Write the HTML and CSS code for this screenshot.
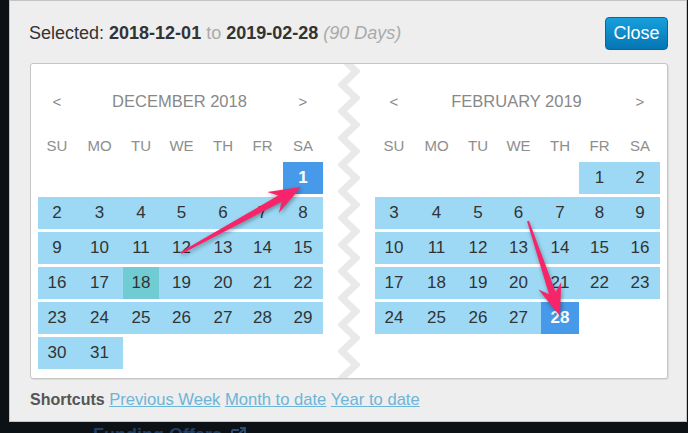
FILE: index.html
```html
<!DOCTYPE html>
<html lang="en">
<head>
    <meta charset="UTF-8">
    <title>Date Range</title>
    <link rel="stylesheet" href="styles.css">
</head>
<body>
    <div class="dialog">
        <div class="dialog-head">
            <div class="summary">Selected: <b>2018-12-01</b> <span class="muted">to</span> <b>2019-02-28</b> <i class="muted">(90 Days)</i></div>
            <button type="button" class="btn-close">Close</button>
        </div>

        <div class="calendars">
            <div class="month">
                <div class="month-head">
                    <span class="nav">&lt;</span>
                    <span class="title">DECEMBER 2018</span>
                    <span class="nav nav-next">&gt;</span>
                </div>
                <div class="weekdays">
                    <span>SU</span><span>MO</span><span>TU</span><span>WE</span><span>TH</span><span>FR</span><span>SA</span>
                </div>
                <div class="days">
                    <span class="empty"></span><span class="empty"></span><span class="empty"></span><span class="empty"></span><span class="empty"></span><span class="empty"></span><span class="sel">1</span>
                    <span>2</span><span>3</span><span>4</span><span>5</span><span>6</span><span>7</span><span>8</span>
                    <span>9</span><span>10</span><span>11</span><span>12</span><span>13</span><span>14</span><span>15</span>
                    <span>16</span><span>17</span><span class="today">18</span><span>19</span><span>20</span><span>21</span><span>22</span>
                    <span>23</span><span>24</span><span>25</span><span>26</span><span>27</span><span>28</span><span>29</span>
                    <span>30</span><span>31</span>
                </div>
            </div>

            <div class="tear">
                <svg width="22" height="314" viewBox="0 0 22 314">
                    <polyline points="4,-6 18,7.3 4,20.7 18,34 4,47.3 18,60.7 4,74 18,87.3 4,100.7 18,114 4,127.3 18,140.7 4,154 18,167.3 4,180.7 18,194 4,207.3 18,220.7 4,234 18,247.3 4,260.7 18,274 4,287.3 18,300.7 4,314 18,327"
                        fill="none" stroke="#e9e9e9" stroke-width="7" />
                </svg>
            </div>

            <div class="month">
                <div class="month-head">
                    <span class="nav">&lt;</span>
                    <span class="title">FEBRUARY 2019</span>
                    <span class="nav nav-next">&gt;</span>
                </div>
                <div class="weekdays">
                    <span>SU</span><span>MO</span><span>TU</span><span>WE</span><span>TH</span><span>FR</span><span>SA</span>
                </div>
                <div class="days">
                    <span class="empty"></span><span class="empty"></span><span class="empty"></span><span class="empty"></span><span class="empty"></span><span>1</span><span>2</span>
                    <span>3</span><span>4</span><span>5</span><span>6</span><span>7</span><span>8</span><span>9</span>
                    <span>10</span><span>11</span><span>12</span><span>13</span><span>14</span><span>15</span><span>16</span>
                    <span>17</span><span>18</span><span>19</span><span>20</span><span>21</span><span>22</span><span>23</span>
                    <span>24</span><span>25</span><span>26</span><span>27</span><span class="sel">28</span>
                </div>
            </div>
        </div>

        <div class="shortcuts">
            <b>Shortcuts</b>
            <a href="#">Previous Week</a>
            <a href="#">Month to date</a>
            <a href="#">Year to date</a>
        </div>
    </div>

    <div class="below">Funding Offers
        <svg width="16" height="16" viewBox="0 0 16 16"><path d="M2 3h7M2 3v12h12V8M10 1h5v5M15 1L8 8" fill="none" stroke="#2a4b73" stroke-width="2"/></svg>
    </div>

    <!-- annotation arrows drawn over the screenshot -->
    <svg class="arrows" width="688" height="433" viewBox="0 0 688 433">
        <polygon points="180.5,252.1 278.3,195.5 267.2,191.9 301,187 278.8,212.9 281.7,201.7 181.5,253.9" />
        <polygon points="528.95,220.7 555.6,292.1 561.2,281.9 560,316 538.4,289.5 549,294.3 527.05,221.3" />
    </svg>
</body>
</html>
```

FILE: styles.css
```css
* {
    margin: 0;
    padding: 0;
    box-sizing: border-box;
}

html, body {
    height: 100%;
    overflow: hidden;
}

body {
    font-family: "Liberation Sans", Arial, sans-serif;
    background: #0c1115;
    color: #333;
    position: relative;
}

.dialog {
    margin-left: 9px;
    width: 678px;
    background: #eeeeee;
    border: 1px solid #c4c4c4;
    padding: 16px 18px 11px 20px;
}

.dialog-head {
    display: flex;
    align-items: center;
    justify-content: space-between;
    height: 33px;
}

.summary {
    font-size: 18px;
    color: #333;
    margin-left: -1px;
}

.summary b {
    font-weight: bold;
}

.muted {
    color: #aaa;
}

.btn-close {
    width: 63px;
    height: 33px;
    font-family: inherit;
    font-size: 18px;
    color: #fff;
    background: linear-gradient(to bottom, #17a0dd 0%, #0575b3 100%);
    border: 1px solid #06679e;
    border-radius: 4px;
    cursor: pointer;
}

.calendars {
    display: flex;
    margin-top: 13px;
    padding: 0 7px;
    background: #fff;
    border: 1px solid #c6c6c6;
    border-radius: 3px;
    box-shadow: 1px 1px 1px rgba(0,0,0,0.08);
}

.month {
    width: 285px;
    padding: 21px 0 9px;
}

.month-head,
.weekdays,
.days {
    display: grid;
    grid-template-columns: 38px 47px 36px 45px 38px 41px 40px;
}

.month-head {
    height: 32px;
    align-items: center;
    color: #888;
    font-size: 16.5px;
    text-align: center;
}

.month-head .title {
    grid-column: 2 / 7;
}

.nav {
    font-size: 15px;
}

.weekdays {
    margin-top: 13px;
    height: 30px;
    align-items: center;
    color: #8e8e8e;
    font-size: 15px;
    text-align: center;
}

.days {
    margin-top: 2px;
    row-gap: 3px;
    grid-auto-rows: 32px;
}

.days span {
    display: flex;
    align-items: center;
    justify-content: center;
    background: #9dd9f5;
    color: #333;
    font-size: 17px;
}

.days .empty {
    background: transparent;
}

.days .today {
    background: #70cbd3;
}

.days .sel {
    background: #4799e9;
    color: #fff;
    font-weight: bold;
}

.tear {
    width: 52px;
    display: flex;
    justify-content: center;
}

.tear svg {
    display: block;
}

.shortcuts {
    margin-top: 11px;
    line-height: 20px;
    font-size: 16px;
}

.shortcuts b {
    color: #555;
}

.shortcuts a {
    color: #6cb5d9;
    font-size: 16.6px;
    text-decoration: underline;
}

.below {
    margin: 3px 0 0 93px;
    line-height: 20px;
    font-size: 18px;
    font-weight: bold;
    color: #1f3f66;
    display: flex;
    align-items: center;
    gap: 8px;
}

.arrows {
    position: absolute;
    left: 0;
    top: 0;
    pointer-events: none;
}

.arrows polygon {
    fill: #f7246a;
    filter: drop-shadow(1px 2px 2px rgba(0,0,0,0.35));
}
```
